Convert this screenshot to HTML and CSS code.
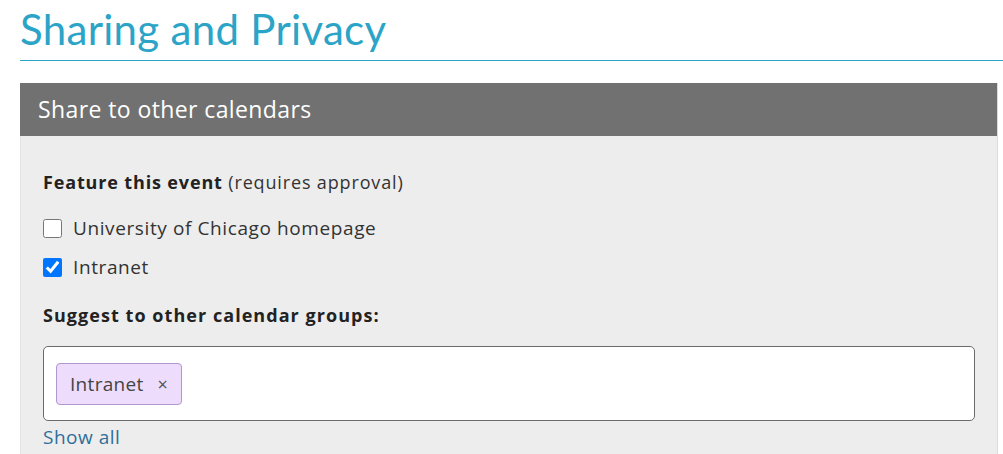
FILE: index.html
```html
<!DOCTYPE html>
<html lang="en">
<head>
<meta charset="utf-8">
<title>Sharing and Privacy</title>
<link rel="stylesheet" href="styles.css">
</head>
<body>
<main class="page">
  <h1 class="page-title">Sharing and Privacy</h1>
  <section class="panel">
    <h2 class="panel-header">Share to other calendars</h2>
    <div class="panel-body">
      <p class="label"><strong>Feature this event</strong> (requires approval)</p>
      <label class="check"><input type="checkbox"><span>University of Chicago homepage</span></label>
      <label class="check"><input type="checkbox" checked><span>Intranet</span></label>
      <p class="label label-suggest"><strong>Suggest to other calendar groups:</strong></p>
      <div class="tag-input">
        <span class="tag">Intranet<span class="tag-x">×</span></span>
      </div>
      <a class="show-all" href="#">Show all</a>
    </div>
  </section>
</main>
</body>
</html>
```
FILE: styles.css
```css
* { box-sizing: border-box; }
html, body { margin: 0; padding: 0; background: #fff; }
body {
  font-family: "Open Sans", Lato, "Liberation Sans", sans-serif;
  color: #222;
}
.page {
  padding: 0 0 0 20px;
}
.page-title {
  margin: 0;
  padding: 6px 0 8px 0;
  font-family: Lato, "Open Sans", sans-serif;
  font-weight: 400;
  font-size: 42px;
  letter-spacing: 0.3px;
  line-height: 46px;
  color: #2ba4c7;
  border-bottom: 1px solid #2ba4c7;
}
.panel {
  margin: 22px 5px 0 0;
  background: #ededed;
  border-right: 1px solid #dcdcdc;
  border-left: 1px solid #e2e2e2;
}
.panel-header {
  margin: 0 0 0 -1px;
  height: 53px;
  background: #717171;
  color: #fff;
  font-weight: 400;
  font-size: 23px;
  letter-spacing: 0.4px;
  line-height: 53px;
  padding-left: 18px;
}
.panel-body {
  padding: 34px 22px 24px 22px;
  display: flex;
  flex-direction: column;
}
.label {
  margin: 0;
  font-size: 18px;
  letter-spacing: 0.85px;
  line-height: 24px;
  color: #333;
}
.label strong { font-weight: 700; color: #222; }
.check {
  display: flex;
  align-items: center;
  gap: 11px;
  font-size: 19px;
  letter-spacing: 0.6px;
  line-height: 24px;
  color: #333;
  margin-top: 22px;
}
.check + .check { margin-top: 15px; }
.check input {
  margin: 0;
  width: 19px;
  height: 19px;
}
.label-suggest { margin-top: 24px; }
.label-suggest strong { letter-spacing: 1.05px; }
.tag-input {
  margin-top: 19px;
  width: 932px;
  height: 75px;
  background: #fff;
  border: 1px solid #6b6b6b;
  border-radius: 5px;
  padding: 16px 12px;
}
.tag {
  display: inline-flex;
  align-items: center;
  height: 42px;
  padding: 0 13px 0 13px;
  background: #eedcfc;
  border: 1px solid #b097d0;
  border-radius: 4px;
  font-size: 19px;
  letter-spacing: 0.3px;
  color: #444;
}
.tag-x {
  margin-left: 14px;
  font-size: 18px;
  color: #555;
}
.show-all {
  align-self: flex-start;
  margin-top: 3px;
  font-size: 19px;
  letter-spacing: 0.5px;
  line-height: 26px;
  color: #2f6f9a;
  text-decoration: none;
}
```
